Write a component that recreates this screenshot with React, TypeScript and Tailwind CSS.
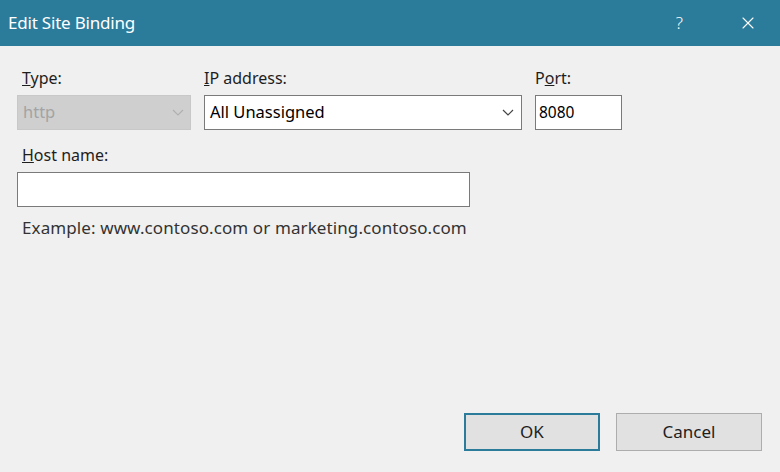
import { X } from 'lucide-react';

const font = { fontFamily: '"Noto Sans", "Open Sans", sans-serif' };

function Chevron({ color }: { color: string }) {
  return (
    <svg width="12" height="7" viewBox="0 0 12 7" fill="none">
      <polyline points="1,1 6,6 11,1" stroke={color} strokeWidth="1.2" />
    </svg>
  );
}

export default function App() {
  return (
    <div className="w-[780px] h-[472px] flex flex-col bg-[#f0f0f0] overflow-hidden" style={font}>
      {/* title bar */}
      <div className="h-[46px] bg-[#2b7b9b] flex items-center text-white shrink-0">
        <span className="pl-[8px] text-[17px] tracking-[-0.2px]">Edit Site Binding</span>
        <span className="ml-auto mr-[55px] text-[17px] font-light">?</span>
        <X className="w-[20px] h-[20px] mr-[22px]" strokeWidth={1.3} />
      </div>

      <div className="flex-1 flex flex-col pl-[17px] pr-[18px] text-[16px] text-[#1e1e1e]">
        {/* first row */}
        <div className="flex gap-[13px] mt-[21px]">
          <div className="w-[174px] flex flex-col">
            <span className="h-[28px] pl-[5px] leading-[22px]"><u>T</u>ype:</span>
            <div className="h-[35px] bg-[#cfcfcf] border border-[#c8c8c8] flex items-center pl-[5px] pr-[6px] text-[#a3a3a3] text-[16.5px]">
              <span>http</span>
              <span className="ml-auto"><Chevron color="#b0b0b0" /></span>
            </div>
          </div>
          <div className="w-[318px] flex flex-col">
            <span className="h-[28px] leading-[22px]"><u>I</u>P address:</span>
            <div className="h-[35px] bg-white border border-[#7a7a7a] flex items-center pl-[5px] pr-[7px] text-black text-[16.5px]">
              <span>All Unassigned</span>
              <span className="ml-auto"><Chevron color="#444" /></span>
            </div>
          </div>
          <div className="w-[87px] flex flex-col">
            <span className="h-[28px] leading-[22px]">P<u>o</u>rt:</span>
            <div className="h-[35px] bg-white border border-[#7a7a7a] flex items-center pl-[3px] text-black text-[15.5px]">
              8080
            </div>
          </div>
        </div>

        {/* host name */}
        <span className="mt-[14px] h-[28px] pl-[5px] leading-[22px]"><u>H</u>ost name:</span>
        <div className="w-[453px] h-[35px] bg-white border border-[#7a7a7a]" />
        <span className="mt-[10px] pl-[5px] leading-[22px] text-[#333] text-[17px] tracking-[0.1px]">Example: www.contoso.com or marketing.contoso.com</span>

        {/* buttons */}
        <div className="mt-auto mb-[21px] flex justify-end gap-[16px] mr-0">
          <button className="w-[136px] h-[38px] bg-[#e1e1e1] border-2 border-[#2b7b9b] text-[17px] text-[#1e1e1e]">OK</button>
          <button className="w-[146px] h-[38px] bg-[#e1e1e1] border border-[#adadad] text-[17px] text-[#1e1e1e]">Cancel</button>
        </div>
      </div>
    </div>
  );
}
